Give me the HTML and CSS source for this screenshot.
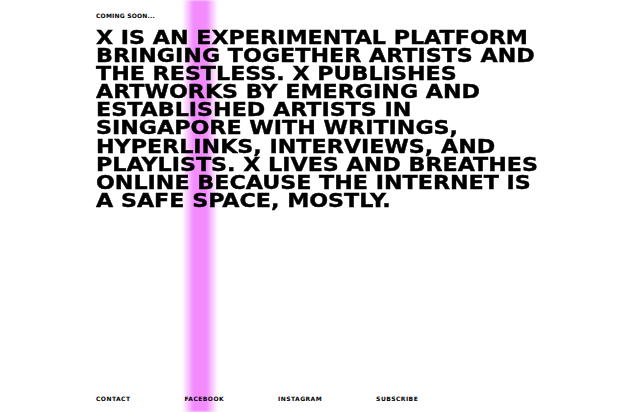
FILE: index.html
```html
<!DOCTYPE html>
<html lang="en">
<head>
<meta charset="utf-8">
<title>X</title>
<link rel="stylesheet" href="styles.css">
</head>
<body>
<div class="beam"></div>
<main class="page">
  <p class="soon">COMING SOON...</p>
  <h1 class="statement">X IS AN EXPERIMENTAL PLATFORM<br>BRINGING TOGETHER ARTISTS AND<br>THE RESTLESS. X PUBLISHES<br>ARTWORKS BY EMERGING AND<br>ESTABLISHED ARTISTS IN<br>SINGAPORE WITH WRITINGS,<br>HYPERLINKS, INTERVIEWS, AND<br>PLAYLISTS. X LIVES AND BREATHES<br>ONLINE BECAUSE THE INTERNET IS<br>A SAFE SPACE, MOSTLY.</h1>
  <nav class="links">
    <a href="#">CONTACT</a>
    <a href="#">FACEBOOK</a>
    <a href="#">INSTAGRAM</a>
    <a href="#">SUBSCRIBE</a>
  </nav>
</main>
</body>
</html>
```
FILE: styles.css
```css
html, body {
  margin: 0;
  height: 100%;
  background: #fff;
}
body {
  position: relative;
  overflow: hidden;
  font-family: "DejaVu Sans", "Liberation Sans", sans-serif;
  font-weight: bold;
  color: #000;
}
.beam {
  position: absolute;
  top: 0;
  bottom: 0;
  left: 182px;
  width: 36px;
  background: linear-gradient(90deg, rgba(244,140,255,0) 0%, rgba(244,140,255,0.55) 18%, #f38bff 32%, #f38bff 68%, rgba(244,140,255,0.55) 82%, rgba(244,140,255,0) 100%);
  filter: blur(1px);
}
.page {
  position: relative;
  height: 100%;
  box-sizing: border-box;
  padding: 13px 0 10px 96px;
  display: flex;
  flex-direction: column;
  align-items: flex-start;
}
.soon {
  margin: 0;
  font-size: 6px;
  line-height: 6px;
  letter-spacing: 0.2px;
}
.statement {
  width: max-content;
  margin: 9px 0 0;
  font-size: 20px;
  line-height: 18.1px;
  font-weight: bold;
  letter-spacing: 0;
  -webkit-text-stroke: 0.4px #000;
  transform: scaleX(1.11);
  transform-origin: left top;
}
.links {
  margin-top: auto;
  display: flex;
  gap: 54px;
  font-size: 6px;
  line-height: 6px;
}
.links a {
  color: #000;
  text-decoration: none;
  letter-spacing: 0.45px;
}
```
